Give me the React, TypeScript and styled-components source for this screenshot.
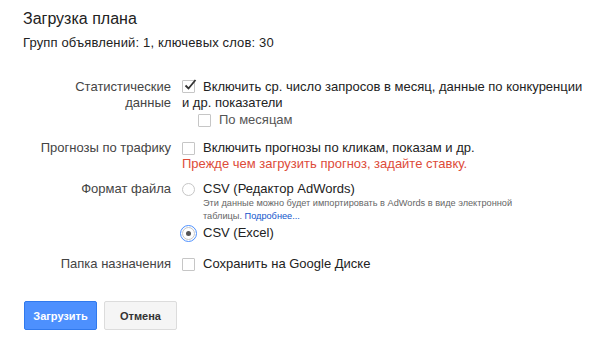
import React from "react";
import styled, { createGlobalStyle } from "styled-components";

const Global = createGlobalStyle`
  html, body { margin: 0; padding: 0; background: #fff; }
  body { font-family: Arial, "Liberation Sans", sans-serif; color: #222; }
`;

const Page = styled.div`
  padding: 9px 0 0 23px;
  width: 582px;
`;

const Title = styled.h1`
  margin: 0;
  font-size: 16px;
  font-weight: normal;
  line-height: 20px;
  color: #222;
`;

const Subtitle = styled.div`
  margin-top: 6px;
  font-size: 13px;
  line-height: 16px;
  color: #222;
  letter-spacing: 0.15px;
`;

const Form = styled.div`
  margin-top: 28px;
  display: grid;
  grid-template-columns: 148px 404px;
  column-gap: 11px;
`;

const Label = styled.div<{ $mt?: number }>`
  margin-top: ${(p) => p.$mt ?? 0}px;
  text-align: right;
  font-size: 13px;
  line-height: 16px;
  color: #444;
`;

const Field = styled.div<{ $mt?: number }>`
  margin-top: ${(p) => p.$mt ?? 0}px;
  font-size: 13px;
  line-height: 16px;
  color: #222;
`;

const Line = styled.div<{ $indent?: number; $mt?: number; $muted?: boolean }>`
  display: flex;
  align-items: center;
  padding-left: ${(p) => p.$indent ?? 0}px;
  margin-top: ${(p) => p.$mt ?? 0}px;
  color: ${(p) => (p.$muted ? "#555" : "inherit")};
`;

const FlowText = styled.div`
  font-size: 13px;
  line-height: 16px;
`;

const Box = styled.span`
  position: relative;
  display: inline-block;
  width: 11px;
  height: 11px;
  border: 1px solid #c6c6c6;
  border-radius: 1px;
  background: #fff;
  margin-right: 8px;
  vertical-align: -2px;
  flex: none;
`;

const Check = styled.svg`
  position: absolute;
  left: 0px;
  top: -3px;
  width: 15px;
  height: 15px;
`;

const Radio = styled.span<{ $focus?: boolean }>`
  position: relative;
  display: inline-flex;
  align-items: center;
  justify-content: center;
  width: 11px;
  height: 11px;
  border: 1px solid #c6c6c6;
  border-radius: 50%;
  background: #fff;
  margin-right: 8px;
  flex: none;
  outline: ${(p) => (p.$focus ? "1px solid #4d90fe" : "none")};
  outline-offset: 1px;
`;

const Dot = styled.span`
  width: 5px;
  height: 5px;
  border-radius: 50%;
  background: #555;
`;

const ErrorText = styled.div`
  color: #dd4b39;
`;

const Hint = styled.div`
  padding-left: 21px;
  font-size: 9.2px;
  line-height: 13px;
  color: #666;
`;

const Link = styled.a`
  color: #15c;
  text-decoration: none;
`;

const Buttons = styled.div`
  margin-top: 29px;
  margin-left: 1px;
  display: flex;
  gap: 7px;
`;

const Button = styled.button<{ $primary?: boolean }>`
  height: 29px;
  width: 73px;
  padding: 0;
  border-radius: 2px;
  font-family: Arial, "Liberation Sans", sans-serif;
  font-size: 11px;
  font-weight: bold;
  border: 1px solid ${(p) => (p.$primary ? "#3079ed" : "#dcdcdc")};
  background: ${(p) => (p.$primary ? "#4d90fe" : "#f5f5f5")};
  color: ${(p) => (p.$primary ? "#fff" : "#333")};
`;

const Checkbox = ({ checked }: { checked?: boolean }) => (
  <Box>
    {checked && (
      <Check viewBox="0 0 15 15">
        <path d="M2.5 7.5 L5.5 10.5 L12.5 2" fill="none" stroke="#333" strokeWidth="1.8" />
      </Check>
    )}
  </Box>
);

export default function App() {
  return (
    <>
      <Global />
      <Page>
        <Title>Загрузка плана</Title>
        <Subtitle>Групп объявлений: 1, ключевых слов: 30</Subtitle>
        <Form>
          <Label>
            Статистические
            <br />
            данные
          </Label>
          <Field>
            <FlowText>
              <Checkbox checked />
              Включить ср. число запросов в месяц, данные по конкуренции и др. показатели
            </FlowText>
            <Line $indent={16} $mt={1} $muted>
              <Checkbox />
              По месяцам
            </Line>
          </Field>

          <Label $mt={12}>Прогнозы по трафику</Label>
          <Field $mt={12}>
            <Line>
              <Checkbox />
              Включить прогнозы по кликам, показам и др.
            </Line>
            <ErrorText>Прежде чем загрузить прогноз, задайте ставку.</ErrorText>
          </Field>

          <Label $mt={9}>Формат файла</Label>
          <Field $mt={9}>
            <Line>
              <Radio />
              CSV (Редактор AdWords)
            </Line>
            <Hint>
              Эти данные можно будет импортировать в AdWords в виде электронной
              <br />
              таблицы. <Link href="#">Подробнее...</Link>
            </Hint>
            <Line $mt={2}>
              <Radio $focus>
                <Dot />
              </Radio>
              CSV (Excel)
            </Line>
          </Field>

          <Label $mt={15}>Папка назначения</Label>
          <Field $mt={15}>
            <Line>
              <Checkbox />
              Сохранить на Google Диске
            </Line>
          </Field>
        </Form>
        <Buttons>
          <Button $primary>Загрузить</Button>
          <Button>Отмена</Button>
        </Buttons>
      </Page>
    </>
  );
}
